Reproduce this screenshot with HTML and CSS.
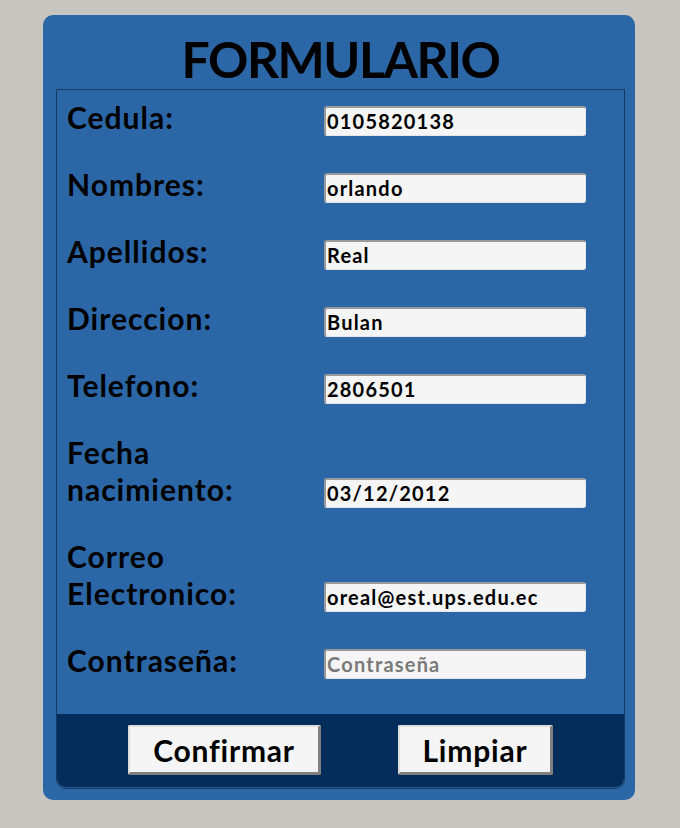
FILE: index.html
```html
<!DOCTYPE html>
<html lang="es">
<head>
<meta charset="utf-8">
<title>Formulario</title>
<link rel="stylesheet" href="styles.css">
</head>
<body>
<div class="card">
  <h1 class="title">FORMULARIO</h1>
  <div class="panel">
    <div class="fields">
      <label class="label">Cedula:</label>
      <div class="input">0105820138</div>
      <label class="label">Nombres:</label>
      <div class="input">orlando</div>
      <label class="label">Apellidos:</label>
      <div class="input">Real</div>
      <label class="label">Direccion:</label>
      <div class="input">Bulan</div>
      <label class="label">Telefono:</label>
      <div class="input">2806501</div>
      <label class="label">Fecha<br>nacimiento:</label>
      <div class="input">03/12/2012</div>
      <label class="label">Correo<br>Electronico:</label>
      <div class="input">oreal@est.ups.edu.ec</div>
      <label class="label">Contraseña:</label>
      <div class="input placeholder">Contraseña</div>
    </div>
    <div class="footer">
      <button class="btn btn-confirm">Confirmar</button>
      <button class="btn btn-clear">Limpiar</button>
    </div>
  </div>
</div>
</body>
</html>
```

FILE: styles.css
```css
html, body {
  margin: 0;
  padding: 0;
}
body {
  background: #c8c4bf;
  font-family: "Lato", "DejaVu Sans", sans-serif;
  width: 680px;
  height: 828px;
  padding-top: 15px;
  box-sizing: border-box;
}
.card {
  margin-left: 43px;
  width: 592px;
  height: 785px;
  background: #2b67a7;
  border-radius: 10px;
  padding: 0 10px 0 13px;
  box-sizing: border-box;
  display: flex;
  flex-direction: column;
}
.title {
  margin: 0;
  height: 74px;
  line-height: 88px;
  text-align: center;
  font-size: 50px;
  font-weight: 700;
  color: #000;
  letter-spacing: -1.5px;
}
.panel {
  width: 569px;
  height: 700px;
  border: 1px solid #163a63;
  border-radius: 0 0 10px 10px;
  box-sizing: border-box;
  display: flex;
  flex-direction: column;
  overflow: hidden;
}
.fields {
  flex: 1;
  display: grid;
  grid-template-columns: 257px 262px;
  row-gap: 30px;
  align-items: end;
  align-content: start;
  padding: 9px 0 0 10px;
}
.label {
  font-size: 30px;
  font-weight: 700;
  line-height: 37px;
  color: #000;
  letter-spacing: 1px;
}
.input {
  height: 30px;
  box-sizing: border-box;
  background: #f5f5f5;
  border-style: solid;
  border-width: 2px 1px 1px 2px;
  border-color: #9a9a9a #e6e6e6 #e6e6e6 #9a9a9a;
  border-radius: 3px;
  font-size: 20px;
  font-weight: 700;
  line-height: 27px;
  padding-left: 1px;
  color: #000;
  letter-spacing: 1.2px;
}
.placeholder {
  color: #7a7a7a;
}
.footer {
  height: 74px;
  background: #042d5c;
  display: flex;
  padding: 11px 0 0 71px;
  box-sizing: border-box;
  border-bottom: 1px solid #2a5a90;
  border-radius: 0 0 9px 9px;
}
.btn {
  height: 50px;
  box-sizing: border-box;
  background: #f5f5f5;
  border-style: solid;
  border-width: 2px 3px 3px 2px;
  border-color: #dedede #808080 #808080 #dedede;
  border-radius: 2px;
  font-family: "Lato", "DejaVu Sans", sans-serif;
  font-size: 30px;
  font-weight: 700;
  color: #000;
  padding: 0;
  line-height: 44px;
  letter-spacing: 0.8px;
}
.btn-confirm {
  width: 193px;
}
.btn-clear {
  width: 155px;
  margin-left: 77px;
}
```
